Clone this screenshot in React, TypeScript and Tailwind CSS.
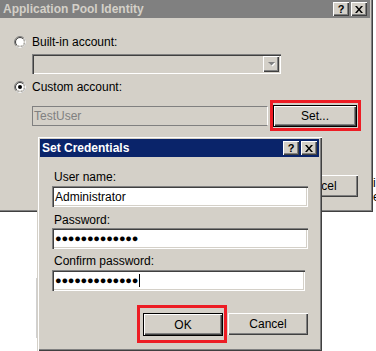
import React from 'react';

const raised = 'bg-[#d4d0c8] shadow-[inset_1px_1px_#ffffff,inset_-1px_-1px_#404040,inset_-2px_-2px_#808080]';
const sunken = 'shadow-[inset_1px_1px_#808080,inset_2px_2px_#404040,inset_-1px_-1px_#ffffff,inset_-2px_-2px_#d4d0c8]';

function Radio({ checked }: { checked?: boolean }) {
  return (
    <svg width="12" height="12" viewBox="0 0 12 12" className="shrink-0">
      <circle cx="6" cy="6" r="4" fill="#ffffff" />
      <circle cx="6" cy="6" r="5.5" fill="none" stroke="#808080" />
      <path d="M9.89 2.11 A5.5 5.5 0 0 1 2.11 9.89" fill="none" stroke="#ffffff" />
      <circle cx="6" cy="6" r="4.5" fill="none" stroke="#404040" />
      <path d="M9.18 2.82 A4.5 4.5 0 0 1 2.82 9.18" fill="none" stroke="#d4d0c8" />
      {checked && <circle cx="6" cy="6" r="2" fill="#000000" />}
    </svg>
  );
}

function CaptionButtons() {
  return (
    <div className="flex gap-[2px]">
      <div className={`${raised} flex h-[14px] w-[16px] items-center justify-center text-[11px] font-bold leading-none text-black`}>?</div>
      <div className={`${raised} flex h-[14px] w-[16px] items-center justify-center`}>
        <svg width="8" height="7" viewBox="0 0 8 7">
          <path d="M0 0h2l2 2.5L6 0h2L5 3.5 8 7H6L4 4.5 2 7H0l3-3.5z" fill="#000000" />
        </svg>
      </div>
    </div>
  );
}

function Button({ label, isDefault, className = '' }: { label: string; isDefault?: boolean; className?: string }) {
  return (
    <div className={`${className} ${isDefault ? 'border border-black' : ''}`}>
      <div className={`${raised} flex h-full w-full items-center justify-center text-black`}>{label}</div>
    </div>
  );
}

function PasswordBox({ caret }: { caret?: boolean }) {
  return (
    <div className={`${sunken} flex h-[21px] items-center bg-white pl-[3px]`}>
      <span className="text-[11px] leading-none tracking-[-0.25px] text-black">●●●●●●●●●●●●●</span>
      {caret && <span className="ml-[1px] h-[13px] w-[1px] bg-black" />}
    </div>
  );
}

export default function App() {
  return (
    <div className="relative h-[351px] w-[376px] overflow-hidden bg-white font-['Liberation_Sans',Arial,sans-serif] text-[12px] leading-[14px]">
      {/* background window */}
      <div className="absolute left-0 top-0 h-[212px] w-[373px] bg-[#d4d0c8] shadow-[inset_-1px_-1px_#404040,inset_-2px_-2px_#808080]">
        <div className="flex h-[18px] w-[370px] items-center justify-between bg-[#808080] pl-[3px] pr-[3px]">
          <span className="font-bold text-[#d4d0c8]">Application Pool Identity</span>
          <CaptionButtons />
        </div>
        <div className="flex w-[370px] flex-col pl-[14px]">
          <div className="mt-[17px] flex h-[14px] items-center gap-[6px]">
            <Radio />
            <span className="text-black">Built-in account:</span>
          </div>
          <div className={`${sunken} ml-[18px] mt-[5px] flex h-[20px] w-[249px] items-center justify-end bg-[#d4d0c8] pr-[2px]`}>
            <div className={`${raised} flex h-[16px] w-[16px] items-center justify-center`}>
              <svg width="7" height="5" viewBox="0 0 7 5">
                <path d="M1 1h7L4.5 4.5z" fill="#ffffff" />
                <path d="M0 0h7L3.5 3.5z" fill="#808080" />
              </svg>
            </div>
          </div>
          <div className="mt-[6px] flex h-[14px] items-center gap-[6px]">
            <Radio checked />
            <span className="text-black">Custom account:</span>
          </div>
          <div className="mt-[11px] flex items-start">
            <div className="ml-[18px] mt-[1px] flex h-[20px] w-[236px] items-center border border-[#808080] border-r-white bg-[#d4d0c8] pl-[1px] text-[#808080]">
              TestUser
            </div>
            <Button label="Set..." isDefault className="ml-[5px] h-[22px] w-[84px]" />
          </div>
          <div className="mt-[48px] flex justify-end pr-[12px]">
            <Button label="Cancel" className="h-[22px] w-[80px]" />
          </div>
        </div>
      </div>

      {/* bits of the page underneath */}
      <div className="absolute left-[36px] top-[278px] h-[60px] w-[1px] bg-[#d0d0d0]" />
      <div className="absolute left-[373px] top-[176px] flex w-[3px] flex-col overflow-hidden text-black">
        <span>i</span>
        <span>e</span>
      </div>

      {/* front dialog */}
      <div className="absolute left-[37px] top-[136px] flex h-[215px] w-[285px] flex-col bg-[#d4d0c8] p-[3px] shadow-[inset_1px_1px_#d4d0c8,inset_2px_2px_#ffffff,inset_-1px_-1px_#404040,inset_-2px_-2px_#808080]">
        <div className="flex h-[18px] items-center justify-between bg-[#0a246a] pl-[2px] pr-[2px]">
          <span className="font-bold text-white">Set Credentials</span>
          <CaptionButtons />
        </div>
        <div className="flex flex-col pl-[12px] pr-[11px]">
          <span className="ml-[2px] mt-[13px] text-black">User name:</span>
          <div className={`${sunken} mt-[2px] flex h-[21px] items-center bg-white pl-[3px] text-black`}>Administrator</div>
          <span className="ml-[2px] mt-[6px] text-black">Password:</span>
          <div className="mt-[1px]">
            <PasswordBox />
          </div>
          <span className="ml-[2px] mt-[5px] text-black">Confirm password:</span>
          <div className="mr-[3px] mt-[2px]">
            <PasswordBox caret />
          </div>
          <div className="mt-[22px] flex justify-end gap-[5px]">
            <Button label="OK" isDefault className="h-[23px] w-[80px]" />
            <Button label="Cancel" className="h-[22px] w-[80px]" />
          </div>
        </div>
      </div>

      {/* red highlight boxes */}
      <div className="absolute left-[270px] top-[100px] h-[31px] w-[91px] border-[3px] border-[#ed1c24]" />
      <div className="absolute left-[137px] top-[305px] h-[38px] w-[90px] border-[3px] border-[#ed1c24]" />
    </div>
  );
}
